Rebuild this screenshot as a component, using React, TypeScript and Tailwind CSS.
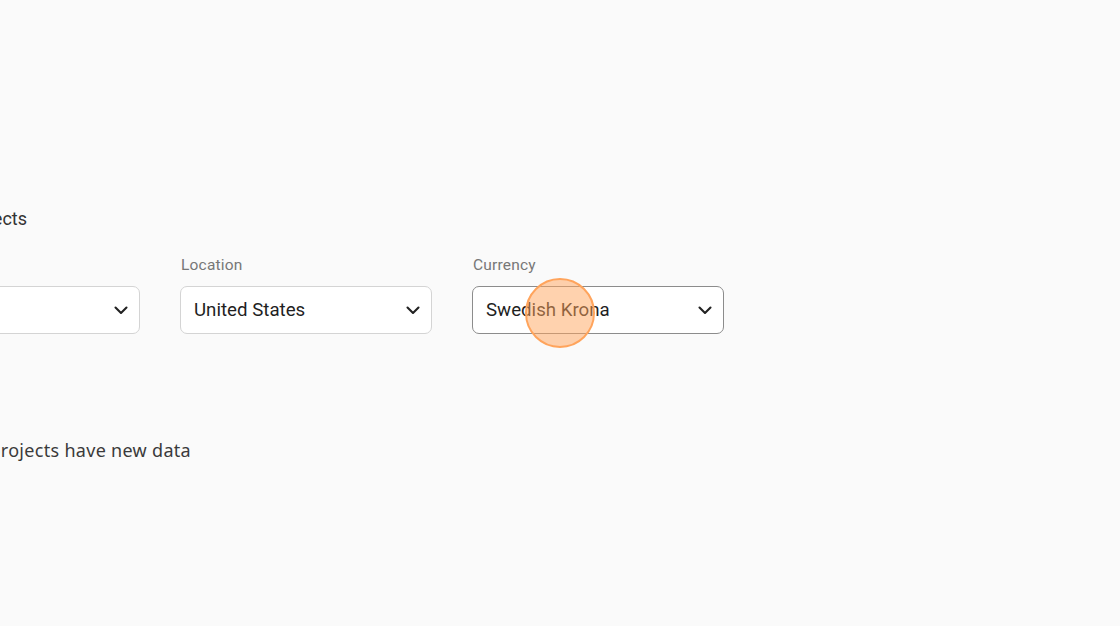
import React from "react";

function Chevron() {
  return (
    <svg width="14" height="9" viewBox="0 0 14 9" fill="none">
      <path d="M1.5 1.5 L7 7 L12.5 1.5" stroke="#222" strokeWidth="2.1" strokeLinecap="round" strokeLinejoin="round" />
    </svg>
  );
}

function Select({ label, value, focused }: { label: string; value: string; focused?: boolean }) {
  return (
    <div className="flex flex-col w-[252px]">
      <div className="h-[20px] mb-[11px] pl-[1px] text-[15.5px] leading-[20px] text-[#777] tracking-[0.2px]">{label}</div>
      <div
        className={`h-[48px] flex items-center justify-between rounded-[7px] bg-white pl-[13px] pr-[11px] border ${
          focused ? "border-[#8c8c8c]" : "border-[#d4d4d4]"
        }`}
      >
        <span className="text-[18.7px] text-[#1f1f1f]">{value}</span>
        <Chevron />
      </div>
    </div>
  );
}

export default function App() {
  return (
    <div
      className="relative w-[1120px] h-[626px] bg-[#fafafa] overflow-hidden"
      style={{ fontFamily: "Roboto, 'Liberation Sans', sans-serif" }}
    >
      <div className="ml-[-112px] pt-[206px]">
        <div className="flex justify-end w-[139px] h-[26px] text-[18px] leading-[26px] text-[#333] whitespace-nowrap">
          Select projects
        </div>
        <div className="flex gap-[40px] mt-[23px]">
          <Select label="Project" value="" />
          <Select label="Location" value="United States" />
          <Select label="Currency" value="Swedish Krona" focused />
        </div>
        <div
          className="flex justify-end w-[303px] mt-[103px] text-[18px] leading-[26px] text-[#3a3a3a] whitespace-nowrap tracking-[0.3px]"
          style={{ fontFamily: "'Noto Sans', 'Open Sans', sans-serif" }}
        >
          All projects have new data
        </div>
      </div>
      <div className="absolute left-[525px] top-[278px] w-[70px] h-[70px] rounded-full bg-[#ffa45c]/50 border-[2px] border-[#ffa45c]" />
    </div>
  );
}
